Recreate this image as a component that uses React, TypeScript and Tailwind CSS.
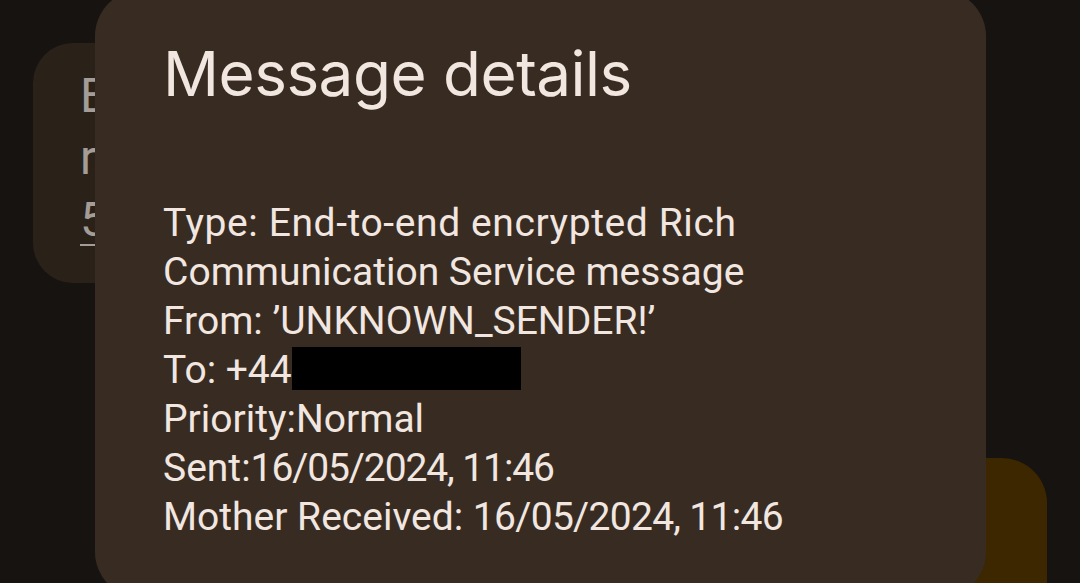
export default function App() {
  const lines = [
    "Type: End-to-end encrypted Rich",
    "Communication Service message",
    "From: \u2019UNKNOWN_SENDER!\u2019",
  ];

  return (
    <div className="relative h-[583px] w-[1080px] overflow-hidden bg-[#171310]">
      {/* Conversation behind the dialog */}
      <div className="flex h-full flex-col px-[33px] pt-[43px]">
        <div className="h-[240px] w-[400px] shrink-0 rounded-[40px] bg-[#2a2119] pl-[47px] pt-[22px] font-['Roboto'] text-[48px] leading-[62px] text-[#a39c97]">
          <div>E</div>
          <div>r</div>
          <div className="underline decoration-2 underline-offset-8">5</div>
        </div>
        <div className="mt-[175px] h-[200px] w-[347px] shrink-0 self-end rounded-[45px] bg-[#3d2700]" />
      </div>

      {/* Dialog */}
      <div className="absolute left-[95px] top-[-10px] h-[608px] w-[891px] rounded-[46px] bg-[#382c22] pl-[68px] pt-[53px] text-[#f2e7e0]">
        <h1 className="font-['Inter'] text-[62px] font-normal leading-[62px] tracking-[-0.5px]">
          Message details
        </h1>
        <div className="mt-[94px] font-['Roboto'] text-[39px] leading-[49px]">
          <div className="tracking-[0.6px]">{lines[0]}</div>
          <div>{lines[1]}</div>
          <div>{lines[2]}</div>
          <div className="flex items-center">
            <span>To: +44</span>
            <span className="-mt-[4px] inline-block h-[43px] w-[229px] bg-black" />
          </div>
          <div>Priority:Normal</div>
          <div>
            Sent:<span className="tracking-[-1.1px]">16/05/2024, 11:46</span>
          </div>
          <div>
            Mother Received: <span className="tracking-[-0.7px]">16/05/2024, 11:46</span>
          </div>
        </div>
      </div>
    </div>
  );
}
